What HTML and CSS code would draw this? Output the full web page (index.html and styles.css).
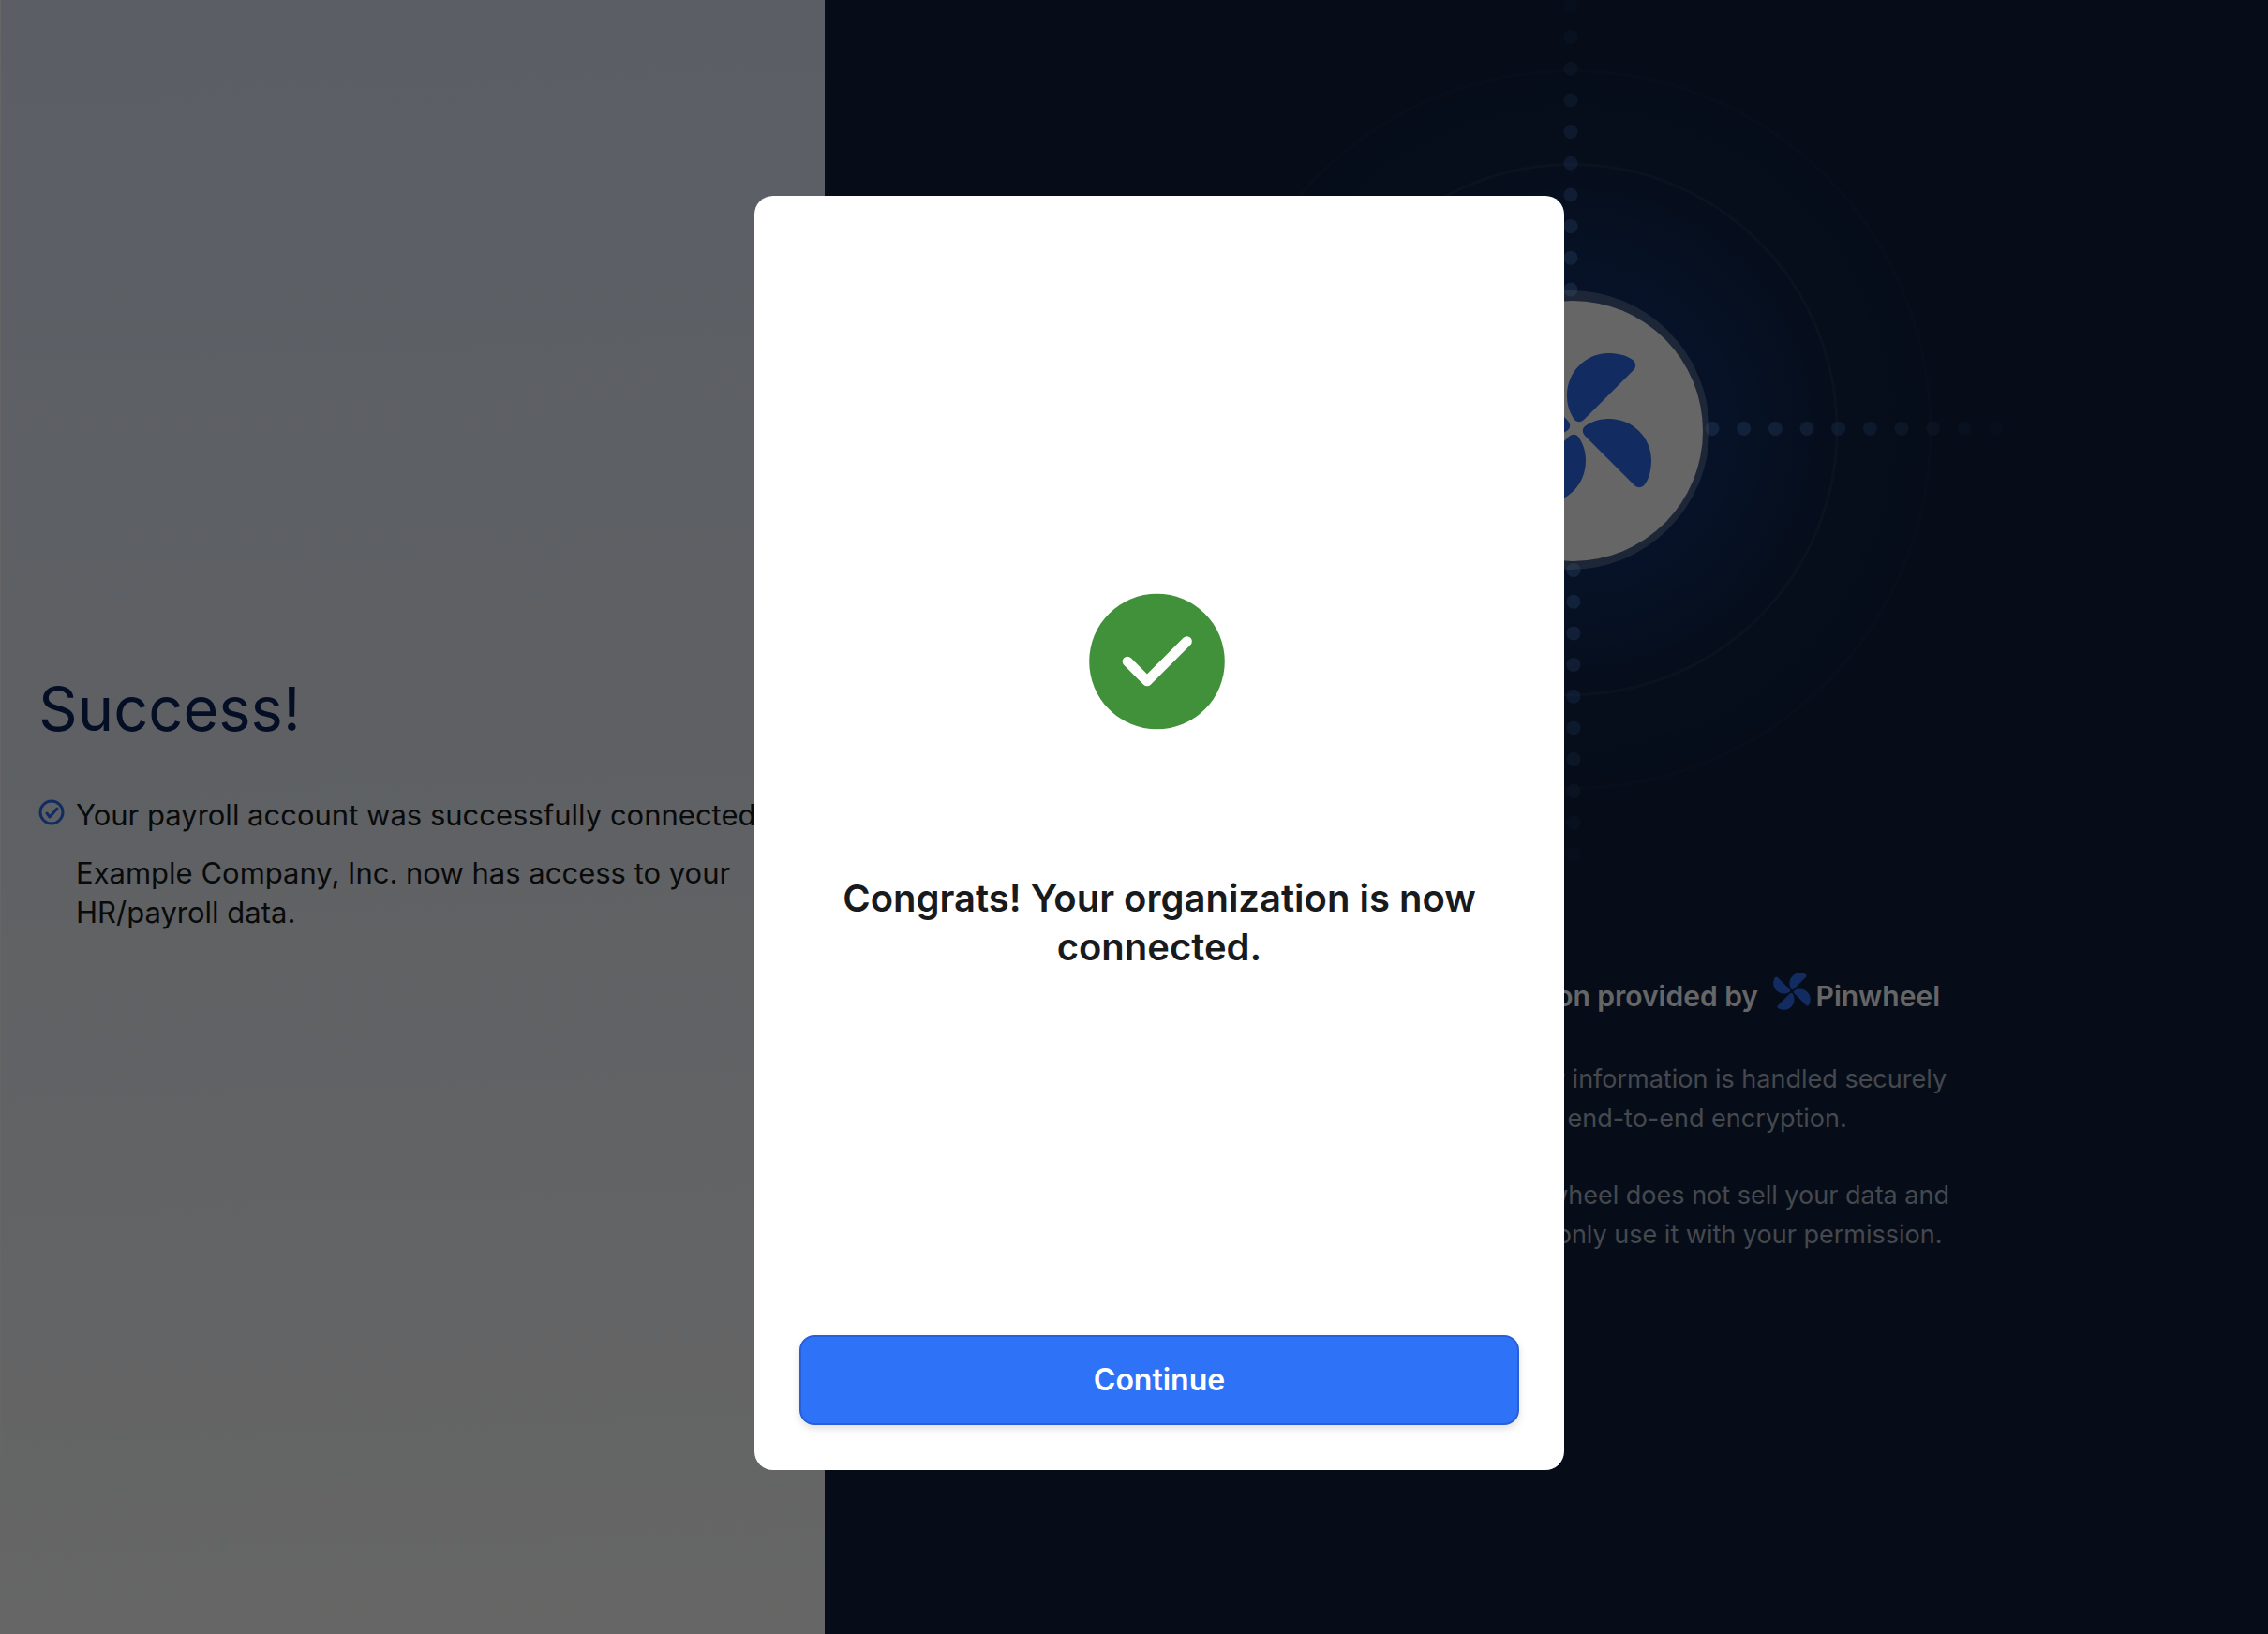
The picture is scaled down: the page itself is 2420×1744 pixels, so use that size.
FILE: index.html
```html
<!DOCTYPE html>
<html lang="en">
<head>
<meta charset="utf-8">
<title>Account connected</title>
<meta name="viewport" content="width=device-width, initial-scale=1">
<link rel="stylesheet" href="styles.css">
</head>
<body>
<svg class="sprite" aria-hidden="true">
  <defs>
    <path id="blade" d="M9-10 61-62C64-65 64-70 60-73C53-78 44-80 34-80C10-80-10-60-10-35C-10-26-8-19-4-12C-1-6 4-5 9-10Z"/>
    <symbol id="pinwheel" viewBox="-81 -81 162 162">
      <use href="#blade"/>
      <use href="#blade" transform="rotate(90)"/>
      <use href="#blade" transform="rotate(180)"/>
      <use href="#blade" transform="rotate(270)"/>
    </symbol>
  </defs>
</svg>

<main class="page">
  <section class="status">
    <h1 class="status-title">Success!</h1>
    <ul class="status-list">
      <li class="status-item">
        <svg class="status-icon" viewBox="0 0 28 28" aria-hidden="true">
          <circle cx="14" cy="14" r="12"/>
          <path d="M9 15l3 4 8-9"/>
        </svg>
        <span class="status-line">Your payroll account was successfully connected.</span>
      </li>
      <li class="status-item status-item-plain">Example Company, Inc. now has access to your HR/payroll data.</li>
    </ul>
  </section>

  <section class="provider">
    <svg class="orbit" viewBox="0 0 928 928" aria-hidden="true">
      <defs>
        <radialGradient id="glow">
          <stop offset="0" stop-color="#1850b8" stop-opacity=".46"/>
          <stop offset=".4" stop-color="#1850b8" stop-opacity=".3"/>
          <stop offset=".7" stop-color="#1850b8" stop-opacity=".08"/>
          <stop offset="1" stop-color="#1850b8" stop-opacity="0"/>
        </radialGradient>
        <g id="dots" fill="#4674be">
          <circle cx="150" r="7.5" opacity=".64"/>
          <circle cx="183.7" r="7.5" opacity=".58"/>
          <circle cx="217.4" r="7.5" opacity=".52"/>
          <circle cx="251" r="7.5" opacity=".46"/>
          <circle cx="284.700" r="7.5" opacity=".4"/>
          <circle cx="318.400" r="7.5" opacity=".34"/>
          <circle cx="352" r="7.5" opacity=".27"/>
          <circle cx="385.700" r="7.5" opacity=".18"/>
          <circle cx="419.400" r="7.5" opacity=".12"/>
          <circle cx="453" r="7.5" opacity=".08"/>
        </g>
      </defs>
      <circle cx="464" cy="458" r="380" fill="url(#glow)"/>
      <circle cx="465" cy="458.500" r="383" fill="none" stroke="#fff" stroke-opacity=".03" stroke-width="3"/>
      <circle cx="465" cy="458.500" r="283" fill="none" stroke="#fff" stroke-opacity=".05" stroke-width="3"/>
      <use href="#dots" transform="translate(464 459) rotate(-90)"/>
      <use href="#dots" transform="translate(467 458.500) rotate(90)"/>
      <use href="#dots" transform="translate(465 457.500)"/>
      <use href="#dots" transform="translate(464 457.500) rotate(180)"/>
      <circle cx="463" cy="459" r="149" fill="#fff" fill-opacity=".24"/>
      <circle cx="466" cy="460" r="139" fill="#fff"/>
      <use href="#pinwheel" x="389" y="376" width="162" height="162" fill="#2d6ef5"/>
    </svg>
    <div class="provider-copy">
      <h2 class="provider-title">Connection provided by <svg class="provider-logo" aria-hidden="true"><use href="#pinwheel"/></svg>Pinwheel</h2>
      <div class="provider-notes">
        <p>Your information is handled securely<br>with end-to-end encryption.</p>
        <p>Pinwheel does not sell your data and<br>will only use it with your permission.</p>
      </div>
    </div>
  </section>
</main>

<div class="overlay">
  <div class="modal" role="dialog" aria-modal="true" aria-labelledby="modal-title">
    <div class="modal-body">
      <svg class="modal-icon" viewBox="0 0 150 146" aria-hidden="true">
        <circle cx="72.500" cy="73" r="72.300" fill="#41913b"/>
        <path d="M41 73l21 21 42.500-42.500" fill="none" stroke="#fff" stroke-width="10.700" stroke-linecap="round" stroke-linejoin="round"/>
      </svg>
      <h2 class="modal-title" id="modal-title">Congrats! Your organization is now connected.</h2>
    </div>
    <button class="modal-button" type="button">Continue</button>
  </div>
</div>
</body>
</html>
```
FILE: styles.css
```css
* {
  box-sizing: border-box;
}

body {
  margin: 0;
  font-family: Inter, "Liberation Sans", sans-serif;
}

h1, h2, p, ul {
  margin: 0;
  padding: 0;
}

.sprite {
  position: absolute;
  width: 0;
  height: 0;
}

.page {
  display: grid;
  grid-template-columns: 4fr 7fr;
  min-height: 100vh;
}

.status {
  display: flex;
  flex-direction: column;
  justify-content: center;
  gap: 52px;
  min-width: 0;
  padding: 0 40px 32px;
  border-left: 1px solid #fff;
  background: linear-gradient(178deg, #e4ecfd, #ebf1fa 45%, #fffffe);
  color: #181b1b;
}

.status-title {
  font-size: 65px;
  font-weight: 400;
  line-height: 80px;
  color: #0a2660;
}

.status-list {
  display: flex;
  flex-direction: column;
  gap: 20px;
  font-size: 31px;
  line-height: 42px;
  list-style: none;
}

.status-item {
  display: flex;
  gap: 12px;
  white-space: nowrap;
}

.status-item-plain {
  padding-left: 40px;
  white-space: normal;
}

.status-icon {
  flex: none;
  width: 28px;
  height: 28px;
  margin-top: 4px;
  fill: none;
  stroke: #2d6ef5;
  stroke-width: 3;
  stroke-linecap: round;
  stroke-linejoin: round;
}

.provider {
  display: flex;
  flex-direction: column;
  align-items: center;
  min-width: 0;
  padding: 0 0 40px 52px;
  background: #0f2140;
}

.orbit {
  width: 928px;
  height: 928px;
}

.provider-copy {
  display: flex;
  flex-direction: column;
  align-items: flex-end;
  align-self: flex-end;
  gap: 44px;
  margin: 110px 340px 0 0;
}

.provider-title {
  margin-right: 10px;
  font-size: 30px;
  font-weight: 600;
  line-height: 48px;
  color: #fff;
}

.provider-logo {
  width: 40px;
  height: 40px;
  margin: 0 6px 0 8px;
  fill: #2d6ef5;
  vertical-align: -4px;
}

.provider-notes {
  display: flex;
  flex-direction: column;
  gap: 40px;
  font-size: 27px;
  line-height: 42px;
  color: #adb5c0;
}

.overlay {
  position: fixed;
  inset: 0;
  display: flex;
  align-items: center;
  justify-content: center;
  padding: 34px 0 0 54px;
  background: rgba(0, 0, 0, .6);
}

.modal {
  display: flex;
  flex-direction: column;
  width: 864px;
  max-width: 100%;
  height: 78vh;
  padding: 48px;
  border-radius: 20px;
  background: #fff;
}

.modal-body {
  display: flex;
  flex: 1;
  flex-direction: column;
  align-items: center;
  justify-content: center;
  gap: 154px;
  padding-bottom: 12px;
}

.modal-icon {
  width: 150px;
  height: 146px;
}

.modal-title {
  max-width: 700px;
  font-size: 40px;
  font-weight: 600;
  line-height: 52px;
  text-align: center;
  color: #181a1c;
}

.modal-button {
  height: 96px;
  border: 2px solid #285fd6;
  border-radius: 16px;
  background: #2e72f7;
  box-shadow: 0 4px 8px rgba(0, 0, 0, .12);
  font: 600 32px/40px Inter, "Liberation Sans", sans-serif;
  color: #fff;
}
```
